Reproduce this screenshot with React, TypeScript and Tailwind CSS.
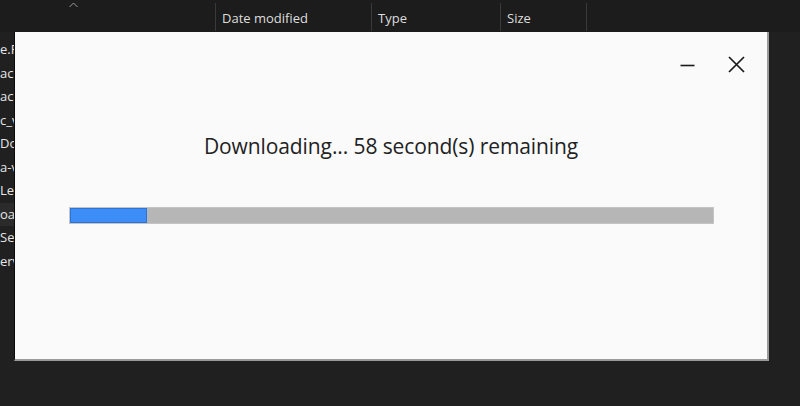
import React from "react";

const rows = ["e.Photos", "ackup", "ackage", "c_video", "Download", "a-video", "Learn", "oader", "Setup", "erver"];

export default function App() {
  return (
    <div className="relative w-[800px] h-[406px] overflow-hidden bg-[#202020]" style={{ fontFamily: '"Open Sans", "Noto Sans", sans-serif' }}>
      {/* explorer header */}
      <div className="flex h-[32px] bg-[#1c1c1c] text-[13px] text-[#dedede]">
        <div className="relative w-[215px] shrink-0">
          <svg className="absolute left-[69px] top-[2px]" width="9" height="6" viewBox="0 0 9 6">
            <path d="M0.5 5 L4.5 1 L8.5 5" fill="none" stroke="#9a9a9a" strokeWidth="1" />
          </svg>
        </div>
        <div className="w-[156px] shrink-0 border-l border-[#3a3a3a] mt-[3px] mb-[1px] pl-[6px] pt-[3px] flex items-center">Date modified</div>
        <div className="w-[129px] shrink-0 border-l border-[#3a3a3a] mt-[3px] mb-[1px] pl-[6px] pt-[3px] flex items-center">Type</div>
        <div className="w-[87px] shrink-0 border-l border-[#3a3a3a] border-r mt-[3px] mb-[1px] pl-[6px] pt-[3px] flex items-center">Size</div>
      </div>
      {/* file rows */}
      <div className="pt-[6px] text-[13px] text-[#e6e6e6]">
        {rows.map((r, i) => (
          <div key={i} className={`h-[23.5px] w-[600px] flex items-center whitespace-nowrap ${i === 7 ? "bg-[#2b2b2b]" : ""}`}>
            {r}
          </div>
        ))}
      </div>
      {/* dialog */}
      <div className="absolute left-[14px] top-[32px] w-[755px] h-[329px] bg-[#fafafa] border-l border-l-[#0a0a0a] border-r-2 border-r-[#9a9a9a] border-b-2 border-b-[#9a9a9a] flex flex-col">
        <div className="flex justify-end items-center gap-[33px] pr-[22px] pt-[16px] h-[49px]">
          <svg width="15" height="16" viewBox="0 0 15 16">
            <path d="M0.5 8.5 H14.5" stroke="#1a1a1a" strokeWidth="1.6" />
          </svg>
          <svg width="17" height="17" viewBox="0 0 17 17">
            <path d="M1 1 L16 16 M16 1 L1 16" stroke="#1a1a1a" strokeWidth="1.7" />
          </svg>
        </div>
        <div className="flex justify-center mt-[55px] h-[21px] text-[21px] text-[#222] leading-none tracking-[-0.1px]">
          Downloading... 58 second(s) remaining
        </div>
        <div className="ml-[54px] mr-[53px] mt-[50px] h-[17px] bg-[#b6b6b6] border border-[#c4c4c4] flex">
          <div className="w-[77px] h-full bg-[#3d8df7] border border-[#2d73d8]" />
        </div>
      </div>
    </div>
  );
}
